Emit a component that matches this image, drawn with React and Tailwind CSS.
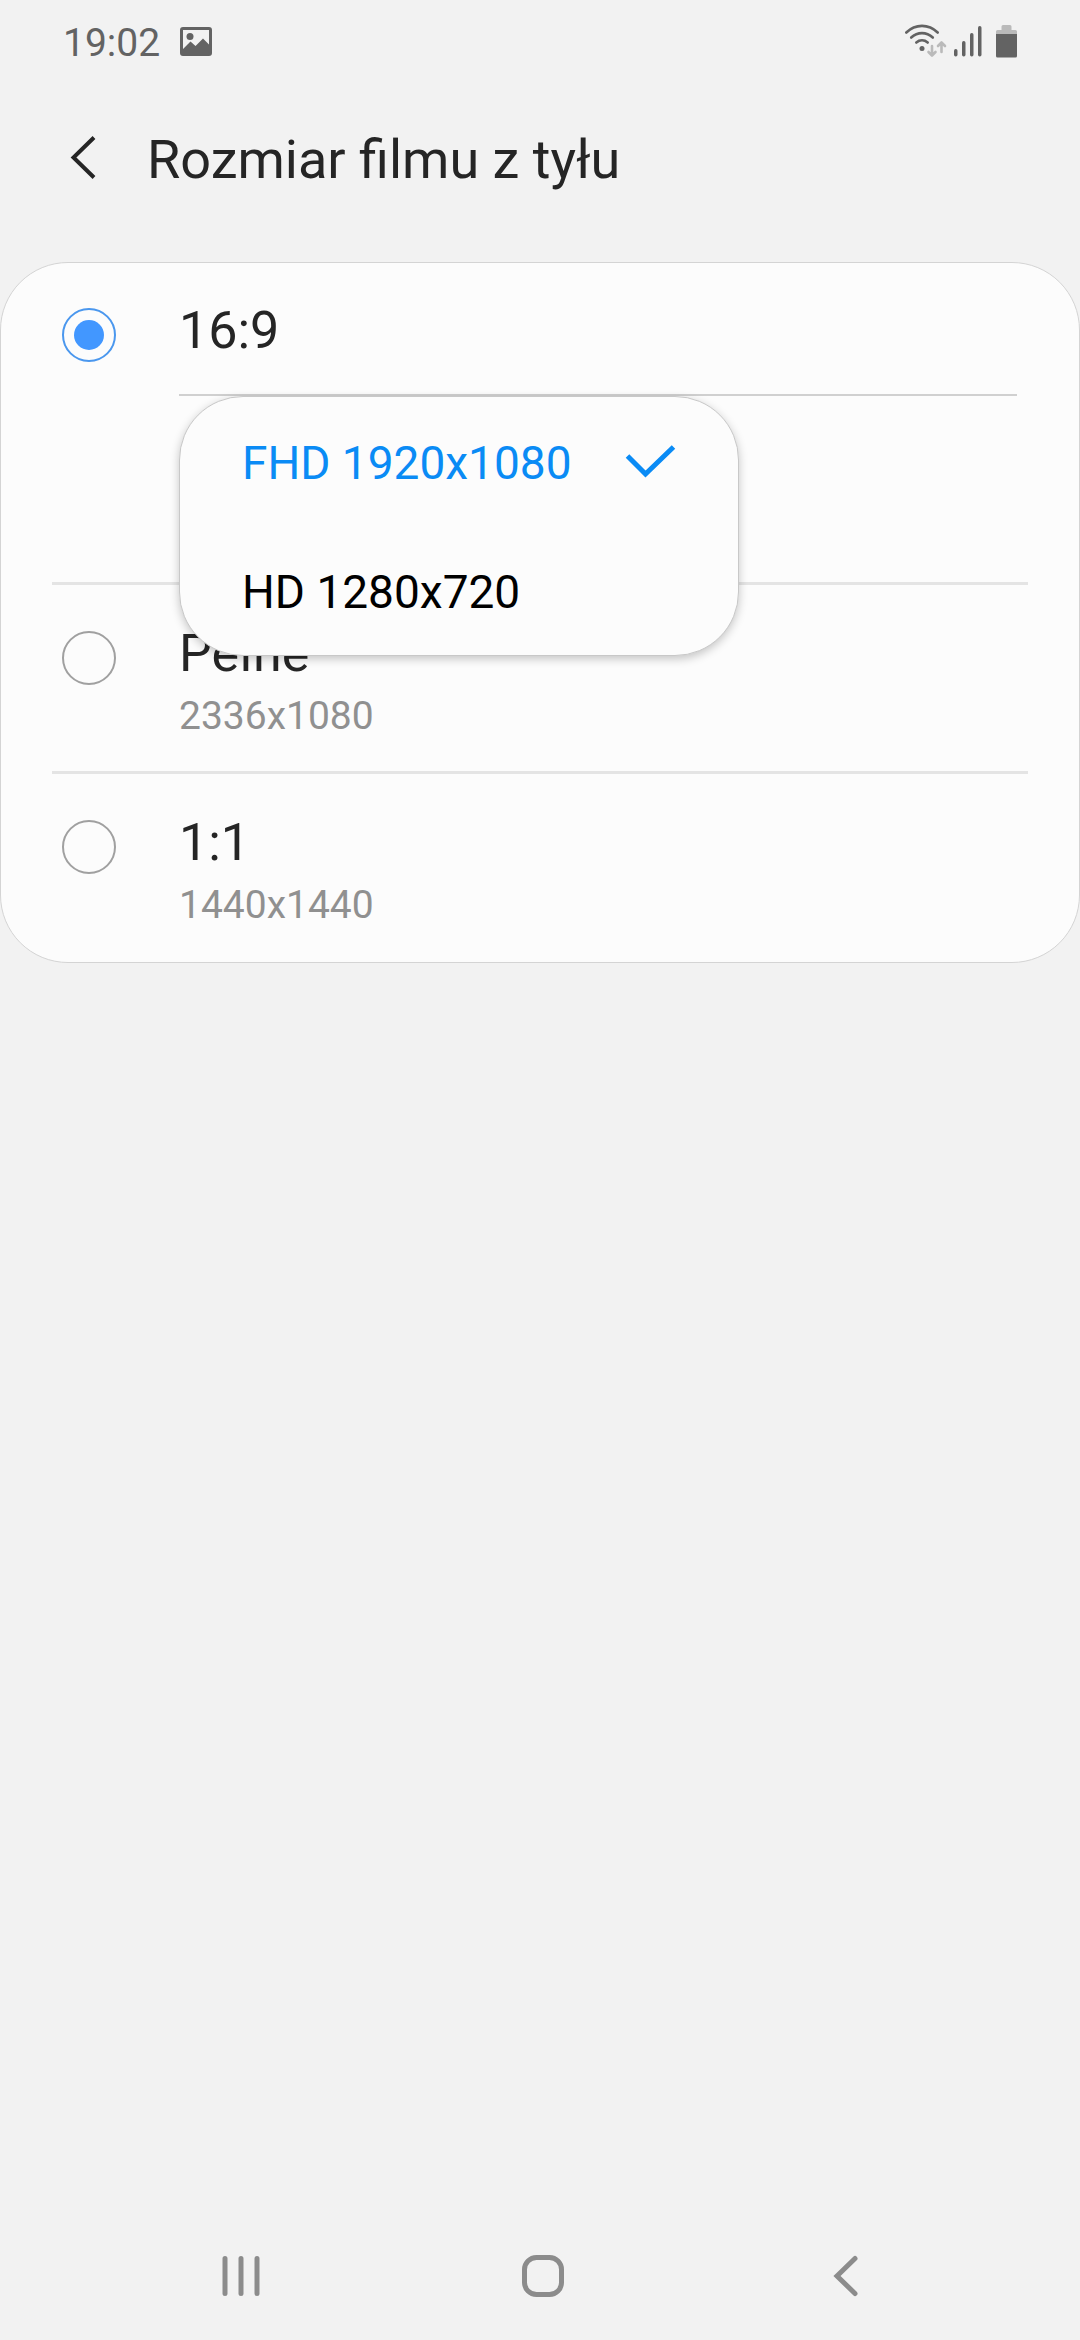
import React, { useState } from 'react';

const RESOLUTIONS = [
  { id: 'fhd', label: 'FHD 1920x1080' },
  { id: 'hd', label: 'HD 1280x720' },
];

const SIZES = [
  { id: 'full', label: 'Pełne', detail: '2336x1080' },
  { id: 'square', label: '1:1', detail: '1440x1440' },
];

function StatusBar() {
  return (
    <div className="flex h-[86px] items-center justify-between pl-[63px] pr-[63px] text-[#636363]">
      <div className="flex items-center gap-[20px]">
        <span className="text-[39px] leading-[48px]">19:02</span>
        {/* Picture notification */}
        <svg className="h-[38px] w-[32px]" viewBox="0 0 32 38" fill="currentColor">
          <path
            fillRule="evenodd"
            d="M3 3h26a3 3 0 0 1 3 3v23a3 3 0 0 1-3 3H3a3 3 0 0 1-3-3V6a3 3 0 0 1 3-3zM3 6v19l7.500-7.500 5 4.500 7.500-7.500 6 6V6z"
          />
          <circle cx="10" cy="12.500" r="3.500" />
        </svg>
      </div>

      <div className="flex items-center gap-[7px]">
        {/* Wi-Fi with traffic arrows */}
        <svg className="h-[38px] w-[43px]" viewBox="0 0 43 38" fill="none" strokeLinecap="round">
          <g stroke="currentColor" strokeWidth="2.600">
            <path d="M2.300 8.500C11.500-.400 24.500-.400 33.700 8.500" />
            <path d="M7.200 13.500c6.400-5.900 15.200-5.900 21.600 0" />
            <path d="M12.300 18.500c3.400-2.900 8-2.900 11.400 0" />
          </g>
          <circle cx="18" cy="24.500" r="2.500" fill="currentColor" />
          <g stroke="#bababa" strokeWidth="2.600" strokeLinejoin="round">
            <path d="M28 22v9M24.500 28l3.500 3.500 3.500-3.500" />
            <path d="M37.500 28v-9M34 22l3.500-3.500L41 22" />
          </g>
        </svg>
        {/* Signal strength */}
        <svg className="h-[38px] w-[28px]" viewBox="0 0 28 38" fill="currentColor">
          <rect x="0" y="25" width="3.500" height="7.500" rx="1.700" />
          <rect x="8" y="17" width="3.500" height="15.500" rx="1.700" />
          <rect x="16" y="9" width="3.500" height="23.500" rx="1.700" />
          <rect x="24" y="2" width="3.500" height="30.500" rx="1.700" />
        </svg>
        {/* Battery */}
        <svg className="ml-[7px] h-[38px] w-[21px]" viewBox="0 0 21 38">
          <path d="M0 10V7.500A1.500 1.500 0 0 1 1.500 6H5.500V2.500A1.500 1.500 0 0 1 7 1h7a1.500 1.500 0 0 1 1.500 1.500V6h4A1.500 1.500 0 0 1 21 7.500V10z" fill="#bababa" />
          <path d="M0 10h21v22a1.500 1.500 0 0 1-1.500 1.500h-18A1.500 1.500 0 0 1 0 32z" fill="currentColor" />
        </svg>
      </div>
    </div>
  );
}

function SizeRadio({ id, label, detail, checked, onChange }) {
  return (
    <div className="flex items-start gap-[63px] pl-[10px]">
      <input
        id={id}
        type="radio"
        name="video-size"
        checked={checked}
        onChange={onChange}
        className="mt-[7px] size-[54px] shrink-0 appearance-none rounded-full border-2 border-[#a0a0a0] bg-clip-content p-[10px] checked:border-[#4a97ee] checked:bg-[#4297ff]"
      />
      <label htmlFor={id} className="flex flex-1 flex-col gap-[8px]">
        <span className="text-[52px] leading-[60px] text-[#252525]">{label}</span>
        {detail && <span className="text-[39px] leading-[48px] text-[#909090]">{detail}</span>}
      </label>
    </div>
  );
}

function ResolutionMenu({ value, onChange }) {
  return (
    <div
      role="listbox"
      aria-label="16:9"
      className="absolute left-0 top-0 z-10 w-[560px] rounded-[64px] border border-[#c8c8c8] bg-[#fcfcfc] shadow-[0_3px_10px_rgba(0,0,0,0.22)]"
    >
      {RESOLUTIONS.map((option) => {
        const selected = option.id === value;

        return (
          <button
            key={option.id}
            type="button"
            role="option"
            aria-selected={selected}
            onClick={() => onChange(option.id)}
            className={`flex h-[129px] w-full items-center justify-between pl-[62px] pr-[62px] pt-[3px] text-left text-[46px] leading-[56px] ${
              selected ? 'text-[#0a8bf5]' : 'text-black'
            }`}
          >
            {option.label}
            {selected && (
              <svg className="h-[36px] w-[52px]" viewBox="0 0 52 36" fill="none" stroke="currentColor" strokeWidth="5">
                <path d="M3.500 11l18 18L49.500 2" />
              </svg>
            )}
          </button>
        );
      })}
    </div>
  );
}

function NavigationBar() {
  return (
    <nav className="mt-auto grid h-[128px] grid-cols-3 place-items-center pl-[90px] pr-[83px] text-[#8c8c8c]">
      <button type="button" aria-label="Ostatnie">
        <svg className="h-[44px] w-[44px]" viewBox="0 0 44 44" fill="none" stroke="currentColor" strokeWidth="5" strokeLinecap="round">
          <path d="M6 4.500v35M22 4.500v35M38 4.500v35" />
        </svg>
      </button>
      <button type="button" aria-label="Ekran główny">
        <svg className="h-[44px] w-[44px]" viewBox="0 0 44 44" fill="none" stroke="currentColor" strokeWidth="5">
          <rect x="3.500" y="3.500" width="37" height="37" rx="12" />
        </svg>
      </button>
      <button type="button" aria-label="Wstecz">
        <svg className="h-[44px] w-[44px]" viewBox="0 0 44 44" fill="none" stroke="currentColor" strokeWidth="5" strokeLinecap="round">
          <path d="M31 4.500L13 22l18 17.500" />
        </svg>
      </button>
    </nav>
  );
}

export default function App() {
  const [size, setSize] = useState('wide');
  const [resolution, setResolution] = useState('fhd');

  return (
    <div className="flex min-h-screen flex-col bg-[#f2f2f2] font-['Roboto',sans-serif]">
      <StatusBar />

      <header className="flex items-center gap-[49px] pb-[70px] pl-[70px] pr-[63px] pt-[42px] text-[#252525]">
        <button type="button" aria-label="Przejdź wyżej">
          <svg className="h-[48px] w-[28px]" viewBox="0 0 28 48" fill="none" stroke="currentColor" strokeWidth="4">
            <path d="M24 1.500L3.500 21.500 24 41.500" />
          </svg>
        </button>
        <h1 className="text-[54px] leading-[64px]">Rozmiar filmu z tyłu</h1>
      </header>

      <main className="rounded-[68px] border border-[#d4d4d4] bg-[#fcfcfc] px-[51px] pb-[2px]">
        <div className="pt-[38px]">
          <SizeRadio id="wide" label="16:9" checked={size === 'wide'} onChange={() => setSize('wide')} />
          <div className="relative ml-[127px] mr-[11px] mt-[32px] h-[188px] border-t-2 border-[#d0d0d0]">
            <ResolutionMenu value={resolution} onChange={setResolution} />
          </div>
        </div>

        {SIZES.map((item) => (
          <div key={item.id} className="border-t-[3px] border-[#e4e4e4] pb-[31px] pt-[39px]">
            <SizeRadio
              id={item.id}
              label={item.label}
              detail={item.detail}
              checked={size === item.id}
              onChange={() => setSize(item.id)}
            />
          </div>
        ))}
      </main>

      <NavigationBar />
    </div>
  );
}
